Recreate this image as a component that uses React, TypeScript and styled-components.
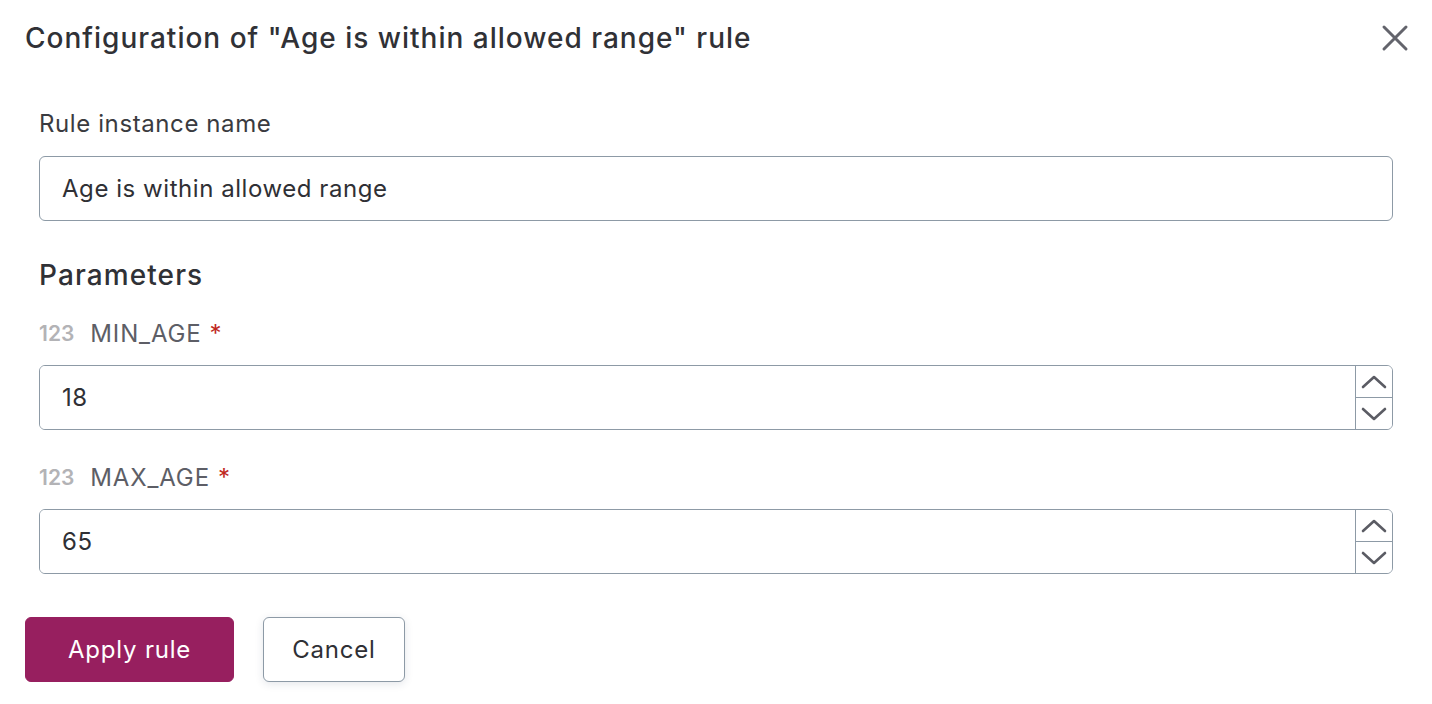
import styled, { createGlobalStyle } from "styled-components";

const GlobalStyle = createGlobalStyle`
  body {
    margin: 0;
    background: #ffffff;
    font-family: Inter, "Noto Sans", sans-serif;
    color: #2f3035;
  }
`;

const Dialog = styled.div`
  width: 1432px;
  height: 704px;
  box-sizing: border-box;
  padding: 18px 21px 0 25px;
`;

const Header = styled.div`
  display: flex;
  align-items: center;
  justify-content: space-between;
  height: 40px;
`;

const Title = styled.h1`
  margin: 0;
  font-size: 28px;
  font-weight: 500;
  letter-spacing: 1px;
  color: #303136;
`;

const CloseButton = styled.button`
  display: flex;
  align-items: center;
  justify-content: center;
  width: 32px;
  height: 32px;
  padding: 0;
  border: none;
  background: none;
  color: #63646c;
  cursor: pointer;
`;

const Body = styled.div`
  padding: 0 18px 0 14px;
`;

const Field = styled.div<{ $first?: boolean }>`
  display: flex;
  flex-direction: column;
  margin-top: ${(p) => (p.$first ? "51px" : "0")};
`;

const Label = styled.label`
  display: flex;
  align-items: center;
  gap: 16px;
  font-size: 24px;
  letter-spacing: 0.6px;
  color: #3a3b40;
`;

const ParamName = styled.span`
  color: #5d5e66;
  letter-spacing: 0.85px;
`;

const TypeTag = styled.span`
  font-size: 21px;
  font-weight: 600;
  letter-spacing: 0;
  color: #b3b3b6;
`;

const Required = styled.span`
  color: #c0281e;
  margin-left: 8px;
`;

const TextInput = styled.input`
  box-sizing: border-box;
  width: 100%;
  height: 65px;
  margin-top: 18px;
  padding: 0 22px;
  border: 1px solid #8d9aa6;
  border-radius: 6px;
  font-family: inherit;
  font-size: 24px;
  letter-spacing: 0.55px;
  color: #2f3035;
  outline: none;
`;

const NumberBox = styled.div`
  display: flex;
  height: 65px;
  margin-top: 17px;
  border: 1px solid #8d9aa6;
  border-radius: 6px;
  box-sizing: border-box;
  overflow: hidden;
`;

const NumberValue = styled.input`
  flex: 1;
  border: none;
  padding: 0 22px;
  font-family: inherit;
  font-size: 24px;
  letter-spacing: 0.55px;
  color: #2f3035;
  outline: none;
`;

const Spinner = styled.div`
  display: flex;
  flex-direction: column;
  width: 36px;
  border-left: 1px solid #8d9aa6;
`;

const SpinButton = styled.button<{ $top?: boolean }>`
  flex: 1;
  display: flex;
  align-items: center;
  justify-content: center;
  padding: 0;
  border: none;
  border-bottom: ${(p) => (p.$top ? "1px solid #8d9aa6" : "none")};
  background: #fff;
  color: #5b5c64;
`;

const SectionTitle = styled.h2`
  margin: 37px 0 27px;
  font-size: 28px;
  font-weight: 500;
  letter-spacing: 1.1px;
  color: #303136;
`;

const ParamList = styled.div`
  display: flex;
  flex-direction: column;
  gap: 33px;
`;

const Actions = styled.div`
  display: flex;
  gap: 29px;
  margin-top: 43px;
`;

const Button = styled.button<{ $primary?: boolean }>`
  height: 65px;
  padding: 0 ${(p) => (p.$primary ? "42px" : "28px")};
  border-radius: 6px;
  border: 1px solid ${(p) => (p.$primary ? "#971f5f" : "#8d9aa6")};
  background: ${(p) => (p.$primary ? "#971f5f" : "#ffffff")};
  color: ${(p) => (p.$primary ? "#ffffff" : "#2f3035")};
  box-shadow: ${(p) => (p.$primary ? "none" : "0 2px 8px rgb(30 50 80 / 0.12)")};
  font-family: inherit;
  font-size: 24px;
  letter-spacing: 0.8px;
  cursor: pointer;
`;

const Chevron = ({ up }: { up?: boolean }) => (
  <svg width="26" height="16" viewBox="0 0 26 16" fill="none">
    <path
      d={up ? "M2 13 13 3l11 10" : "M2 3l11 10L24 3"}
      stroke="currentColor"
      strokeWidth="2.6"
      strokeLinecap="round"
      strokeLinejoin="round"
    />
  </svg>
);

const params = [
  { name: "MIN_AGE", value: "18" },
  { name: "MAX_AGE", value: "65" },
];

export default function App() {
  return (
    <>
      <GlobalStyle />
      <Dialog>
        <Header>
          <Title>Configuration of "Age is within allowed range" rule</Title>
          <CloseButton aria-label="Close">
            <svg width="28" height="28" viewBox="0 0 28 28" fill="none">
              <path
                d="M3 3l22 22M25 3 3 25"
                stroke="currentColor"
                strokeWidth="3"
                strokeLinecap="round"
              />
            </svg>
          </CloseButton>
        </Header>
        <Body>
          <Field $first>
            <Label>Rule instance name</Label>
            <TextInput defaultValue="Age is within allowed range" />
          </Field>
          <SectionTitle>Parameters</SectionTitle>
          <ParamList>
            {params.map((p) => (
              <Field key={p.name}>
                <Label>
                  <TypeTag>123</TypeTag>
                  <ParamName>
                    {p.name}
                    <Required>*</Required>
                  </ParamName>
                </Label>
                <NumberBox>
                  <NumberValue defaultValue={p.value} />
                  <Spinner>
                    <SpinButton $top>
                      <Chevron up />
                    </SpinButton>
                    <SpinButton>
                      <Chevron />
                    </SpinButton>
                  </Spinner>
                </NumberBox>
              </Field>
            ))}
          </ParamList>
        </Body>
        <Actions>
          <Button $primary>Apply rule</Button>
          <Button>Cancel</Button>
        </Actions>
      </Dialog>
    </>
  );
}
